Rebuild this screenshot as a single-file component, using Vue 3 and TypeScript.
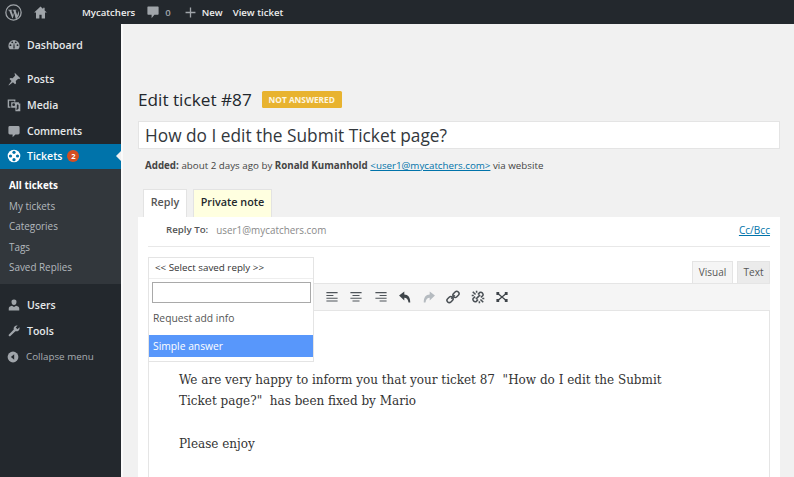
<script setup lang="ts">
const topItems = ['Mycatchers']
const subItems = ['All tickets', 'My tickets', 'Categories', 'Tags', 'Saved Replies']
</script>

<template>
  <div class="page">
    <header class="topbar">
      <svg class="tb-wp" viewBox="0 0 20 20"><circle cx="10" cy="10" r="9" fill="none" stroke="#a0a5aa" stroke-width="1.500"/><path fill="#a0a5aa" d="M3.600 6.800h4.800v.6l-1 .2 2.100 5.600 1.100-3.200-.8-2.400-.8-.2v-.6h4.400v.6l-1 .2 2 5.500.9-2.800c.5-1.700-.1-2.500-.8-3.300 1.900 1.300 2.900 5.300 1 7.700l-2.100 3.100h-.6L10.900 11l-1.700 5.800h-.6L4.900 7.600l-1.300-.2z"/></svg>
      <svg class="tb-home" viewBox="0 0 20 20"><path fill="#a0a5aa" d="M10 2 1.500 10H4v8h4.500v-5h3v5H16v-8h2.500L15.500 7.200V3.500h-2v1.800z"/></svg>
      <span class="tb-site">{{ topItems[0] }}</span>
      <svg class="tb-bubble" viewBox="0 0 20 20"><path fill="#a0a5aa" d="M3 2h14a1 1 0 0 1 1 1v10a1 1 0 0 1-1 1h-5l-4 5v-5H3a1 1 0 0 1-1-1V3a1 1 0 0 1 1-1z"/></svg>
      <span class="tb-count">0</span>
      <svg class="tb-plus" viewBox="0 0 20 20"><path fill="#a0a5aa" d="M8.800 1h2.400v7.800H19v2.400h-7.800V19H8.800v-7.800H1V8.800h7.800z"/></svg>
      <span class="tb-new">New</span>
      <span class="tb-view">View ticket</span>
    </header>

    <div class="layout">
      <aside class="sidebar">
        <a class="nav nav-dash">
          <svg class="ico" viewBox="0 0 20 20"><path fill="#a0a5aa" fill-rule="evenodd" d="M10 3a8 8 0 0 0-8 8c0 2 .7 3.800 2 5h12c1.300-1.200 2-3 2-5a8 8 0 0 0-8-8zM5 11.500a1.300 1.300 0 1 1 0-2.600 1.300 1.300 0 0 1 0 2.600zm2.500-4a1.300 1.300 0 1 1 0-2.600 1.300 1.300 0 0 1 0 2.600zm3.500 7.500H9l.3-4.500.7-4 .7 4zm1.500-7.500a1.300 1.300 0 1 1 0-2.600 1.300 1.300 0 0 1 0 2.600zm2.500 4a1.300 1.300 0 1 1 0-2.600 1.300 1.300 0 0 1 0 2.600z"/></svg>
          Dashboard
        </a>
        <a class="nav nav-gap">
          <svg class="ico" viewBox="0 0 20 20"><path fill="#a0a5aa" d="m11 1 8 8-1.500 1-1.500-.5-3.500 3.500.5 3-1.500 1.500-3-3L3 19l-1 0 4.500-6-3-3L5 8.500l3 .5L11.500 5.500 11 3z"/></svg>
          Posts
        </a>
        <a class="nav">
          <svg class="ico" viewBox="0 0 20 20"><path fill="#a0a5aa" fill-rule="evenodd" d="M1 2h11v3h-2V4H3v8h2v2H1zM6 6h11v2h2v11h-7v-5H6zm3.500 1.500a2 2 0 1 0 0 4 2 2 0 0 0 0-4zM15 9l-1 1v5l-1 .5 1 1.500 2.500-1.500V10z"/></svg>
          Media
        </a>
        <a class="nav">
          <svg class="ico" viewBox="0 0 20 20"><path fill="#a0a5aa" d="M4 3h12a2 2 0 0 1 2 2v8a2 2 0 0 1-2 2h-4l-4 4v-4H4a2 2 0 0 1-2-2V5a2 2 0 0 1 2-2z"/></svg>
          Comments
        </a>
        <a class="nav nav-active">
          <svg class="ico" viewBox="0 0 20 20"><circle cx="10" cy="10" r="9" fill="#fff"/><g fill="#0073aa"><circle cx="10" cy="4.800" r="2.300"/><circle cx="10" cy="15.200" r="2.300"/><circle cx="5" cy="10" r="2.300"/><circle cx="15" cy="10" r="2.300"/></g></svg>
          Tickets
          <span class="badge-count">2</span>
          <i class="pointer"></i>
        </a>
        <ul class="submenu">
          <li v-for="(s, i) in subItems" :key="s" :class="{ current: i === 0 }">{{ s }}</li>
        </ul>
        <a class="nav nav-users">
          <svg class="ico" viewBox="0 0 20 20"><path fill="#a0a5aa" d="M10 2a3.500 3.500 0 0 1 3.500 4c0 2-1.300 4-3.500 4S6.500 8 6.500 6A3.500 3.500 0 0 1 10 2zM7 11l3 2 3-2c3 .5 4.500 2 4.500 4v3h-15v-3c0-2 1.500-3.500 4.500-4z"/></svg>
          Users
        </a>
        <a class="nav">
          <svg class="ico" viewBox="0 0 20 20"><path fill="#a0a5aa" d="M14 2c-2.500 0-4.500 2-4.500 4.500 0 .5 0 1 .2 1.500L2.500 15.500a1.500 1.500 0 0 0 2 2L12 10.300c.5.200 1 .2 1.500.2C16 10.500 18 8.500 18 6l-.2-1.200L15 7.500 12.500 5 15.200 2.200z"/></svg>
          Tools
        </a>
        <a class="collapse">
          <svg class="ico-c" viewBox="0 0 20 20"><circle cx="10" cy="10" r="9" fill="#a0a5aa"/><path fill="#23282d" d="m12 5.500-5.500 4.500 5.500 4.500z"/></svg>
          Collapse menu
        </a>
      </aside>

      <main class="main">
        <div class="heading">
          <h1>Edit ticket #87</h1>
          <span class="status">NOT ANSWERED</span>
        </div>
        <div class="subject">How do I edit the Submit Ticket page?</div>
        <p class="meta"><b>Added:</b> about 2 days ago by <b>Ronald Kumanhold</b> <a>&lt;user1@mycatchers.com&gt;</a> via website</p>

        <div class="tabs">
          <span class="tab tab-reply">Reply</span>
          <span class="tab tab-note">Private note</span>
        </div>

        <section class="panel">
          <div class="replyto">
            <b>Reply To:</b>
            <span class="addr">user1@mycatchers.com</span>
            <a class="cc">Cc/Bcc</a>
          </div>

          <div class="editor">
            <div class="editor-tabs">
              <span class="etab etab-on">Visual</span>
              <span class="etab">Text</span>
            </div>
            <div class="toolbar">
              <svg class="tool" viewBox="0 0 20 20"><path d="M2 3h16v1.600H2zM2 7h10v1.600H2zM2 11h16v1.600H2zM2 15h16v1.600H2z" fill="#4f555a"/></svg>
              <svg class="tool" viewBox="0 0 20 20"><path d="M2 3h16v1.600H2zM5 7h10v1.600H5zM2 11h16v1.600H2zM5 15h10v1.600H5z" fill="#4f555a"/></svg>
              <svg class="tool" viewBox="0 0 20 20"><path d="M2 3h16v1.600H2zM8 7h10v1.600H8zM2 11h16v1.600H2zM8 15h10v1.600H8z" fill="#4f555a"/></svg>
              <svg class="tool" viewBox="0 0 20 20"><path d="M9 2v4.500c5.500 0 8.500 4 8.500 11.500h-2.500c-.5-4.500-2.500-7-6-7V15L1.500 8z" fill="#3f454a"/></svg>
              <svg class="tool" viewBox="0 0 20 20"><path d="M11 2v4.500C5.500 6.500 2.500 10.500 2.500 18H5c.5-4.500 2.500-7 6-7V15l7.500-7z" fill="#b5bbc0"/></svg>
              <svg class="tool" viewBox="0 0 20 20"><g fill="none" stroke="#4a5055" stroke-width="2.200"><rect x="9.500" y="3" width="9.500" height="6.500" rx="3.250" transform="rotate(-45 14.250 6.250)"/><rect x="1" y="10.500" width="9.500" height="6.500" rx="3.250" transform="rotate(-45 5.750 13.750)"/><path d="m7.500 12.500 5-5"/></g></svg>
              <svg class="tool" viewBox="0 0 20 20"><g fill="none" stroke="#4a5055" stroke-width="2.200"><path d="M10 6.500l2.500-3a3.400 3.400 0 0 1 4.500 4.500l-3 2.500M10 13.500l-2.500 3A3.400 3.400 0 0 1 3 12l3-2.500"/><path d="M2.500 2.500l4 4M13.500 13.500l4 4M8 1v3M1 8h3M16 12h3M12 16v3M7 13l6-6"/></g></svg>
              <svg class="tool" viewBox="0 0 20 20"><g fill="#3f454a"><path d="M2 3h4v4H2zM14 3h4v4h-4zM2 13h4v4H2zM14 13h4v4h-4z"/></g><path d="m4 5 12 10M16 5 4 15" stroke="#3f454a" stroke-width="1.800"/></svg>
            </div>
            <div class="content">
              <p>We are very happy to inform you that your ticket 87 &nbsp;"How do I edit the Submit Ticket page?" &nbsp;has been fixed by Mario</p>
              <p>Please enjoy</p>
            </div>

            <div class="dropdown">
              <div class="dd-head">&lt;&lt; Select saved reply &gt;&gt;</div>
              <div class="dd-search"><div class="dd-input"></div></div>
              <div class="dd-opt">Request add info</div>
              <div class="dd-opt dd-sel">Simple answer</div>
            </div>
          </div>
        </section>
      </main>
    </div>
  </div>
</template>

<style scoped>
.page {
  width: 794px;
  height: 477px;
  overflow: hidden;
  display: flex;
  flex-direction: column;
  font-family: "Open Sans", "Noto Sans", sans-serif;
  background: #f1f1f1;
  color: #32373c;
}
.topbar {
  height: 24px;
  flex: none;
  background: #23282d;
  display: flex;
  align-items: center;
  color: #eee;
  font-size: 9.600px;
  font-weight: 600;
}
.tb-wp { width: 17px; height: 17px; margin-left: 5px; }
.tb-home { width: 15px; height: 15px; margin-left: 11px; }
.tb-site { margin-left: 34px; }
.tb-bubble { width: 14px; height: 14px; margin-left: 11px; }
.tb-count { margin-left: 5px; color: #a0a5aa; }
.tb-plus { width: 11px; height: 11px; margin-left: 14px; }
.tb-new { margin-left: 6px; }
.tb-view { margin-left: 10px; }

.layout { flex: 1; display: flex; min-height: 0; }
.sidebar {
  width: 121px;
  flex: none;
  background: #23282d;
  padding-top: 8px;
  color: #eee;
  font-size: 10.500px;
  font-weight: 600;
}
.nav {
  display: flex;
  align-items: center;
  height: 26px;
  padding-left: 7px;
  position: relative;
  color: #e6e8ea;
}
.nav-dash { margin-bottom: 8px; }
.nav-active { background: #0073aa; color: #fff; height: 25px; box-sizing: border-box; padding-bottom: 1px; }
.ico { width: 14px; height: 14px; margin-right: 6px; flex: none; }
.badge-count {
  width: 12px;
  height: 12px;
  border-radius: 50%;
  background: #d54e21;
  color: #fff;
  font-size: 7.500px;
  font-weight: 700;
  display: flex;
  align-items: center;
  justify-content: center;
  margin-left: 5px;
}
.pointer {
  position: absolute;
  right: 0;
  top: 7px;
  border: 5.500px solid transparent;
  border-right-color: #f1f1f1;
  border-left: 0;
}
.submenu {
  list-style: none;
  margin: 0 0 5px;
  padding: 6px 0 6px 9px;
  background: #32373c;
  font-size: 9.900px;
  font-weight: 400;
  color: #b4b9be;
}
.submenu li { height: 20.500px; line-height: 20.500px; }
.submenu .current { color: #fff; font-weight: 700; }
.nav-users { margin-top: 8px; }
.collapse {
  display: flex;
  align-items: center;
  height: 26px;
  padding-left: 7px;
  font-size: 9.800px;
  font-weight: 400;
  color: #a8adb2;
}
.ico-c { width: 12px; height: 12px; margin-right: 7px; }

.main {
  flex: 1;
  min-width: 0;
  padding: 63px 14px 0 17px;
  border-left: 2px solid #fafafa;
  box-sizing: border-box;
}
.heading { display: flex; align-items: center; height: 24px; }
h1 {
  margin: 0 0 0 -2px;
  font-size: 17.200px;
  font-weight: 400;
  color: #23282d;
}
.status {
  margin-left: 10px;
  width: 80px;
  height: 17px;
  border-radius: 1.500px;
  background: #e8b32f;
  color: #fdf6e0;
  font-size: 8.300px;
  font-weight: 700;
  display: flex;
  align-items: center;
  justify-content: center;
}
.subject {
  margin: 10px 0 0 -2px;
  height: 28px;
  background: #fff;
  border: 1px solid #e4e4e4;
  box-sizing: border-box;
  padding-left: 6px;
  font-size: 17.300px;
  line-height: 27px;
  color: #32373c;
}
.meta {
  margin: 9px 0 0 5px;
  font-size: 9.780px;
  line-height: 16px;
  color: #444;
  white-space: nowrap;
}
.meta a { color: #0073aa; text-decoration: underline; }
.tabs {
  display: flex;
  margin: 15px 0 0 3px;
  gap: 6px;
  height: 28px;
}
.tab {
  display: flex;
  align-items: center;
  justify-content: center;
  height: 28px;
  box-sizing: border-box;
  border: 1px solid #e3e3e3;
  border-bottom: 0;
  padding-bottom: 4px;
  font-size: 10.800px;
  font-weight: 600;
}
.tab-reply { width: 44px; background: #fff; color: #555; }
.tab-note { width: 79px; background: #ffffe0; color: #23282d; }

.panel {
  margin-left: -2px;
  background: #fff;
  height: 260px;
  padding: 0 10px;
  box-sizing: border-box;
}
.replyto {
  height: 30px;
  border-bottom: 1px solid #e8e8e8;
  display: flex;
  align-items: center;
  box-sizing: border-box;
  padding: 0 0 4px 18px;
  font-size: 9.700px;
  color: #555;
}
.replyto b { font-weight: 600; }
.addr { margin-left: 8px; color: #8a8a8a; font-size: 9.900px; }
.cc { margin-left: auto; color: #0073aa; text-decoration: underline; font-size: 10.100px; }

.editor { position: relative; margin-top: 14px; }
.editor-tabs {
  display: flex;
  justify-content: flex-end;
  gap: 4px;
  height: 22px;
}
.etab {
  display: flex;
  align-items: center;
  justify-content: center;
  width: 33px;
  background: #ebebeb;
  border: 1px solid #e4e4e4;
  border-bottom: 0;
  box-sizing: border-box;
  padding-bottom: 2px;
  font-size: 10px;
  color: #555;
}
.etab-on { width: 41px; background: #f5f5f5; }
.toolbar {
  height: 28px;
  background: #f5f5f5;
  border: 1px solid #e5e5e5;
  border-width: 1px 0;
  box-sizing: border-box;
  display: flex;
  align-items: center;
  gap: 10.300px;
  padding-left: 177px;
}
.tool { width: 14px; height: 14px; flex: none; }
.content {
  height: 200px;
  border: 1px solid #e5e5e5;
  border-top: 0;
  padding: 59px 90px 0 30px;
  box-sizing: border-box;
  font-family: "DejaVu Serif", serif;
  font-size: 12px;
  line-height: 20.500px;
  color: #333;
}
.content p { margin: 0 0 23px; }

.dropdown {
  position: absolute;
  left: 0;
  top: -4px;
  width: 166px;
  background: #fff;
  border: 1px solid #e4e4e4;
  box-sizing: border-box;
  font-size: 10.300px;
  height: 105px;
}
.dd-head {
  height: 20px;
  line-height: 19px;
  padding-left: 6px;
  border-bottom: 1px solid #eee;
  color: #333;
  font-size: 9.800px;
}
.dd-search { padding: 3px 2px 0 3px; }
.dd-input { height: 21px; border: 1px solid #a9a9a9; box-sizing: border-box; background: #fff; }
.dd-opt { height: 22px; line-height: 22px; padding-left: 4px; color: #555; margin-top: 4px; }
.dd-sel { background: #5897fb; color: #fff; margin-top: 6px; }
</style>
